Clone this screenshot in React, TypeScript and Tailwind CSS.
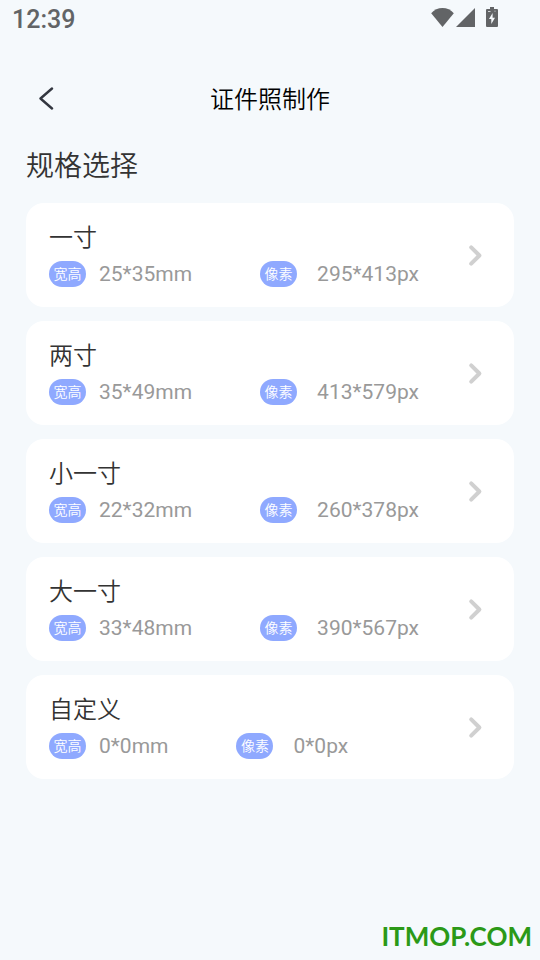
interface PhotoSize {
  name: string;
  size: string;
  pixels: string;
}

const sizes: PhotoSize[] = [
  { name: "一寸", size: "25*35mm", pixels: "295*413px" },
  { name: "两寸", size: "35*49mm", pixels: "413*579px" },
  { name: "小一寸", size: "22*32mm", pixels: "260*378px" },
  { name: "大一寸", size: "33*48mm", pixels: "390*567px" },
  { name: "自定义", size: "0*0mm", pixels: "0*0px" },
];

function StatusBar() {
  return (
    <div className="flex h-10 items-start justify-between pt-1 pr-10 pl-3 text-[#626466]">
      <span className="text-[25px] leading-8 font-medium">12:39</span>
      <div className="flex items-center pt-[2px]">
        <svg className="h-6 w-7" viewBox="0 0 28 24" fill="currentColor">
          <path d="M14.5 21 L3.2 7.2 C6 3.8 10.2 2 14.5 2 s8.5 1.8 11.3 5.2 Z" />
        </svg>
        <svg className="h-6 w-6" viewBox="0 0 24 24" fill="currentColor">
          <path d="M0 21 H19 V2 Z" />
        </svg>
        <svg className="ml-1 h-6 w-4" viewBox="0 0 16 24" fill="currentColor">
          <path
            fillRule="evenodd"
            d="M6 1 h4 v2 h3 a1 1 0 0 1 1 1 v16 a1 1 0 0 1 -1 1 H3 a1 1 0 0 1 -1 -1 V4 a1 1 0 0 1 1 -1 h3 Z M4 5.2 v.7 h2.5 v-.7 Z M10.5 4.8 v.7 h1 v-.7 Z M8.6 7 L5 13 h2.3 v5 L11 11.8 H8.6 Z"
          />
        </svg>
      </div>
    </div>
  );
}

function Badge({ children }: { children: string }) {
  return (
    <span className="flex h-[26px] w-[37px] shrink-0 items-center justify-center rounded-full bg-[#8fa9ff] pb-px text-sm font-[350] text-white">
      {children}
    </span>
  );
}

function SizeCard({ item }: { item: PhotoSize }) {
  return (
    <button
      type="button"
      className="flex h-[104px] w-full items-center justify-between rounded-[18px] bg-white pr-[30px] pl-[23px] text-left"
    >
      <span className="flex flex-col gap-[5px] pb-[3px]">
        <span className="text-2xl leading-9 font-[350] text-[#333333]">{item.name}</span>
        <span className="flex h-[26px] items-center text-[21px] leading-[26px] text-[#999999]">
          <Badge>宽高</Badge>
          <span className="mr-[68px] ml-[13px]">{item.size}</span>
          <Badge>像素</Badge>
          <span className="ml-5">{item.pixels}</span>
        </span>
      </span>
      <svg
        className="h-6 w-4"
        viewBox="0 0 16 24"
        fill="none"
        stroke="#d0d0d0"
        strokeWidth="4"
        strokeLinecap="round"
        strokeLinejoin="round"
      >
        <path d="M3.2 4.3 L11.4 12.5 L3.2 20.7" />
      </svg>
    </button>
  );
}

export default function App() {
  return (
    <div className="flex min-h-screen flex-col bg-[#f5f9fc] font-['Roboto','Noto_Sans_CJK_SC',sans-serif]">
      <StatusBar />
      <header className="grid h-[102px] grid-cols-[1fr_auto_1fr] items-center px-[26px] pt-4">
        <button type="button" aria-label="返回" className="flex h-10 w-10 items-center justify-center">
          <svg
            className="h-6 w-6"
            viewBox="0 0 24 24"
            fill="none"
            stroke="#333740"
            strokeWidth="2.4"
            strokeLinecap="round"
            strokeLinejoin="round"
          >
            <path d="M18 1.5 L6.5 11.5 L18 21.5" />
          </svg>
        </button>
        <h1 className="pt-[2px] text-2xl font-[350] text-black">证件照制作</h1>
      </header>
      <main className="flex-1 px-[26px] pt-1">
        <h2 className="text-[28px] leading-[42px] font-[350] text-[#333333]">规格选择</h2>
        <ul className="mt-[15px] flex flex-col gap-[14px]">
          {sizes.map((item) => (
            <li key={item.name}>
              <SizeCard item={item} />
            </li>
          ))}
        </ul>
      </main>
      <footer className="px-2 pb-[6px] text-right font-['Lato',sans-serif] text-[26px] leading-9 font-bold text-[#2b9917]">
        ITMOP.COM
      </footer>
    </div>
  );
}
